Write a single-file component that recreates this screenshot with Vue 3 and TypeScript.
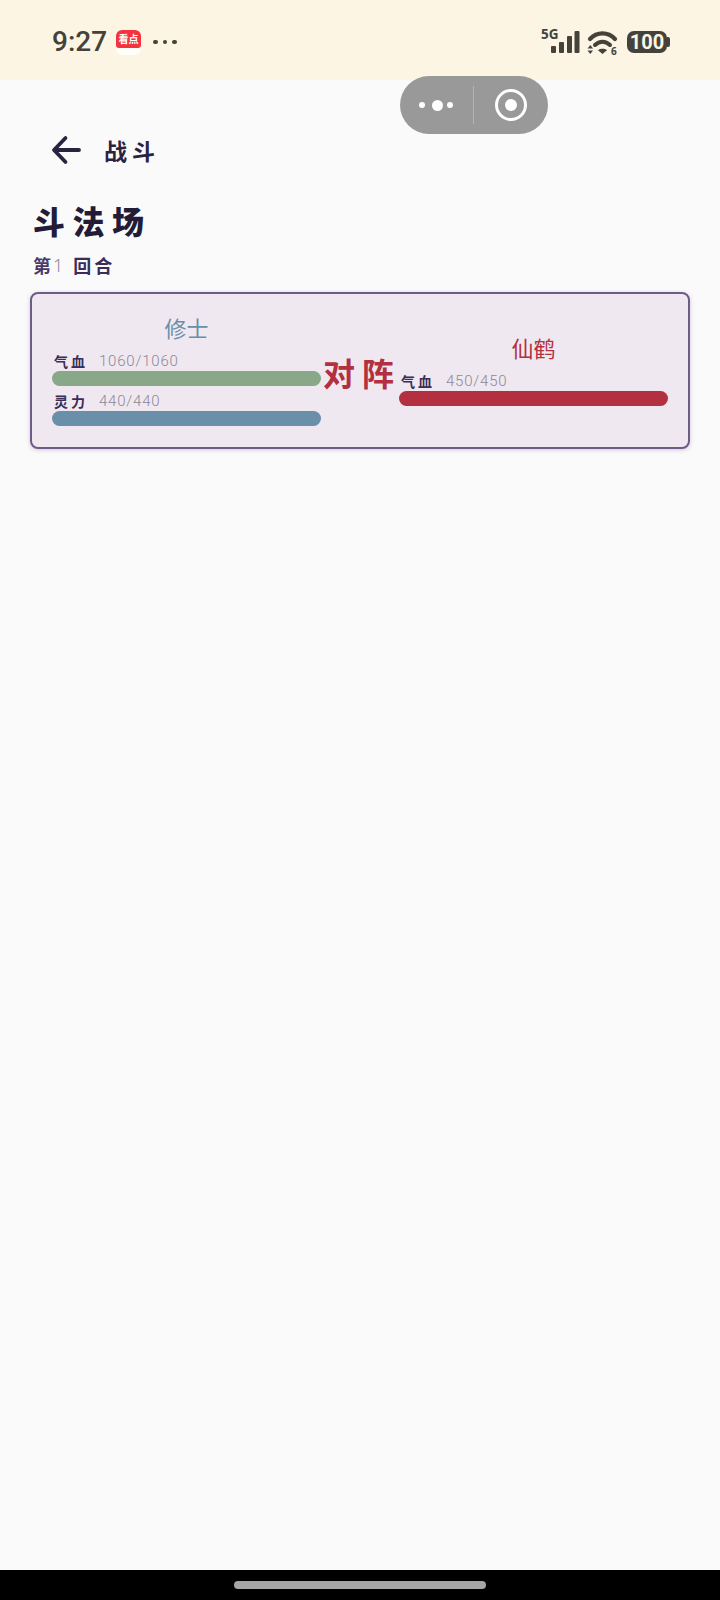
<script setup lang="ts">
interface Stat { label: string; value: string; kind: string }
interface Fighter { name: string; tone: string; stats: Stat[] }
const fighters: Fighter[] = [
  { name: '修士', tone: 'blue', stats: [
    { label: '气血', value: '1060/1060', kind: 'green' },
    { label: '灵力', value: '440/440', kind: 'blue' },
  ] },
  { name: '仙鹤', tone: 'red', stats: [
    { label: '气血', value: '450/450', kind: 'red' },
  ] },
]
</script>

<template>
  <div class="page">
    <header class="status">
      <div class="status-left">
        <span class="time">9:27</span>
        <span class="app-icon"><span class="app-top">看点</span><span class="app-bottom"></span></span>
        <span class="more"><i></i><i></i><i></i></span>
      </div>
      <div class="status-right">
        <svg class="signal" width="50" height="30" viewBox="-6 -3 50 30">
          <text x="1" y="12" class="five-g">5G</text>
          <rect x="11" y="19" width="5" height="7" rx="1" />
          <rect x="19" y="15" width="5" height="11" rx="1" />
          <rect x="27" y="9" width="5" height="17" rx="1" />
          <rect x="34.500" y="4" width="5" height="22" rx="1" />
        </svg>
        <svg class="wifi" width="32" height="26" viewBox="0 0 32 26">
          <path d="M3 9C10 1.500 21 1.500 28 9" fill="none" stroke="#44423a" stroke-width="4.200" stroke-linecap="round" />
          <path d="M8 15C12.500 10.500 18.500 10.500 23 15" fill="none" stroke="#44423a" stroke-width="4" stroke-linecap="round" />
          <path d="M11 20.200C13.500 18.400 17.500 18.400 20 20.200L15.500 24z" fill="#44423a" />
          <path d="M0.500 18.500l2.800-3.500 2.800 3.500zM0.500 20.500h5.600l-2.800 3.500z" fill="#44423a" />
          <text x="24" y="24.500" class="six">6</text>
        </svg>
        <span class="battery"><span class="battery-body">100</span><span class="battery-tip"></span></span>
      </div>
    </header>

    <div class="capsule">
      <span class="capsule-dots"><i></i><i class="big"></i><i></i></span>
      <span class="capsule-line"></span>
      <span class="capsule-target"><i></i></span>
    </div>

    <main class="content">
      <nav class="topbar">
        <svg width="30" height="30" viewBox="0 0 30 30" class="back">
          <path d="M28 15H3.500M14.500 3L3 15l11.500 12" fill="none" stroke="#2a2340" stroke-width="3.800" stroke-linecap="round" stroke-linejoin="round" />
        </svg>
        <span class="topbar-title">战斗</span>
      </nav>

      <h1 class="title">斗法场</h1>
      <p class="round"><span class="round-di">第</span><span class="round-num">1</span><span class="round-he">回合</span></p>

      <section class="arena">
        <div class="fighter" v-for="(f, i) in fighters" :key="f.name" :style="{ order: i * 2 }">
          <div class="name" :class="f.tone">{{ f.name }}</div>
          <div class="stat" v-for="s in f.stats" :key="s.label">
            <div class="stat-row">
              <span class="stat-label">{{ s.label }}</span>
              <span class="stat-value">{{ s.value }}</span>
            </div>
            <div class="bar" :class="s.kind"></div>
          </div>
        </div>
        <div class="versus">对阵</div>
      </section>
    </main>

    <footer class="navbar"><span class="handle"></span></footer>
  </div>
</template>

<style>
html, body { margin: 0; padding: 0; background: #fafafa; }
</style>

<style scoped>
.page {
  position: relative;
  height: 1600px;
  width: 720px;
  display: flex;
  flex-direction: column;
  overflow: hidden;
  background: #fafafa;
  font-family: "Noto Sans CJK SC", "Noto Sans", sans-serif;
}
.status {
  height: 80px;
  flex: none;
  background: #fcf5e3;
  display: flex;
  justify-content: space-between;
  align-items: flex-start;
  padding: 0 50px 0 52px;
  box-sizing: border-box;
}
.status-left { display: flex; align-items: center; margin-top: 24px; height: 36px; }
.time {
  font-family: Roboto, sans-serif;
  font-size: 28px;
  font-weight: 500;
  line-height: 36px;
  color: #44423a;
  width: 64px;
}
.app-icon {
  width: 25px; height: 25px; border-radius: 6px; overflow: hidden;
  display: flex; flex-direction: column; background: #fffdf8;
}
.app-top {
  height: 18px; background: #f4333c; color: #fff;
  font-size: 10px; font-weight: 700; line-height: 18px; text-align: center;
  border-radius: 0 0 3px 3px;
}
.app-bottom { flex: 1; }
.more { display: flex; gap: 5px; margin-left: 12px; }
.more i { width: 4.500px; height: 4.500px; border-radius: 50%; background: #44423a; }
.status-right { display: flex; align-items: flex-start; margin-top: 24px; }
.signal { fill: #44423a; }
.five-g { font-family: "Noto Sans", sans-serif; font-size: 13.500px; font-weight: 700; fill: #44423a; }
.six { font-family: "Noto Sans", sans-serif; font-size: 10px; font-weight: 700; fill: #44423a; }
.wifi { margin-left: 3px; margin-top: 6px; }
.battery { display: flex; align-items: center; margin-left: 8px; margin-top: 7px; }
.battery-body {
  width: 40px; height: 22px; border-radius: 7px; background: #44423a; color: #fcf5e3;
  font-family: Roboto, sans-serif; font-size: 20px; font-weight: 700; line-height: 22px; text-align: center;
}
.battery-tip { width: 3px; height: 10px; border-radius: 0 2px 2px 0; background: #44423a; }

.capsule {
  position: absolute;
  left: 400px; top: 76px;
  width: 148px; height: 58px;
  border-radius: 29px;
  background: #999999;
  display: flex;
  align-items: center;
}
.capsule-dots { width: 73px; display: flex; justify-content: center; align-items: center; padding-right: 1px; box-sizing: border-box; }
.capsule-dots i { width: 6px; height: 6px; border-radius: 50%; background: #fff; }
.capsule-dots i.big { width: 11px; height: 11px; margin: 0 4px 0 7px; }
.capsule-line { width: 1px; height: 38px; background: #b4b4b4; }
.capsule-target {
  margin-left: 21px;
  width: 26px; height: 26px; border: 3px solid #fff; border-radius: 50%;
  display: flex; align-items: center; justify-content: center;
}
.capsule-target i { width: 12px; height: 12px; border-radius: 50%; background: #fff; }

.content { flex: 1; padding: 0 30px; }
.topbar { display: flex; align-items: center; height: 60px; margin-top: 40px; padding-left: 21px; }
.back { flex: none; }
.topbar-title {
  margin-left: 23px;
  font-size: 23px; font-weight: 700; letter-spacing: 5px; color: #2a2340;
}
.title {
  margin: 18px 0 0 3px;
  font-size: 32px; line-height: 44px; font-weight: 900; letter-spacing: 7.500px; color: #221c36;
}
.round {
  margin: 10px 0 0 3px;
  display: flex; align-items: center;
  height: 26px; font-size: 18px; font-weight: 700; color: #4a3a68;
}
.round-num { font-family: "Noto Sans", sans-serif; font-weight: 300; color: #8f84a2; margin-left: 2px; }
.round-he { margin-left: 10px; letter-spacing: 3px; color: #3a2d58; }
.arena {
  margin-top: 14px;
  width: 660px;
  height: 157px;
  box-sizing: border-box;
  padding: 0 20px;
  border: 2px solid #6f5b88;
  border-radius: 8px;
  background: #f0e8f0;
  box-shadow: 0 1px 4px rgba(80, 60, 110, 0.25);
  display: flex;
  align-items: center;
}
.fighter { width: 269px; flex: none; padding-bottom: 4px; }
.name { font-size: 22px; line-height: 32px; text-align: center; margin-bottom: 8px; }
.name.blue { color: #6a8fa8; }
.name.red { color: #b23040; }
.stat + .stat { margin-top: 5px; }
.stat-row { height: 20px; display: flex; align-items: center; padding-left: 2px; }
.stat-label { font-size: 14px; font-weight: 700; letter-spacing: 3px; color: #3a2d58; width: 45px; }
.stat-value {
  font-family: Roboto, sans-serif; font-size: 15px; font-weight: 300;
  letter-spacing: 0.800px; color: #8e8796;
}
.bar { height: 15px; border-radius: 8px; }
.bar.green { background: #88a888; }
.bar.blue { background: #6a8fa8; }
.bar.red { background: #b23040; }
.versus {
  order: 1;
  flex: 0 0 78px;
  width: 78px;
  white-space: nowrap;
  font-size: 32px; font-weight: 700; letter-spacing: 7px; color: #b23040;
  padding-left: 2px;
  box-sizing: border-box;
  margin-top: 2px;
}
.navbar {
  height: 30px; flex: none; background: #000;
  display: flex; align-items: center; justify-content: center;
}
.handle { width: 252px; height: 8px; border-radius: 4px; background: #a5a5a5; }
</style>
